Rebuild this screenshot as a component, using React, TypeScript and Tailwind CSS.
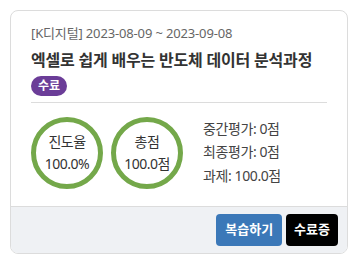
import React from 'react';

const font = { fontFamily: '"Noto Sans", "Noto Sans CJK KR", sans-serif' };

function Ring({ label, value }: { label: string; value: string }) {
  return (
    <div className="w-[72px] h-[72px] rounded-full border-[5px] border-[#74a84a] flex flex-col items-center justify-center text-[14px] leading-[22px] text-[#333] tracking-[-0.5px]">
      <span>{label}</span>
      <span>{value}</span>
    </div>
  );
}

export default function App() {
  return (
    <div className="w-[358px] h-[264px] bg-white p-[10px]" style={font}>
      <div className="h-[244px] rounded-lg border border-[#dcdcdc] flex flex-col overflow-hidden">
        <div className="flex-1 px-[20px] pt-[12px]">
          <div className="text-[13px] leading-[20px] text-[#666] tracking-[-0.15px]">[K디지털] 2023-08-09 ~ 2023-09-08</div>
          <div className="mt-[6px] text-[16px] leading-[22px] font-bold text-[#333] tracking-[-0.2px]">엑셀로 쉽게 배우는 반도체 데이터 분석과정</div>
          <div className="mt-[5px] inline-flex items-center h-[20px] px-[7px] rounded-full bg-[#6b3d98] text-white text-[12px] font-bold">수료</div>
          <div className="mt-[6px] border-t border-[#dcdcdc]" />
          <div className="mt-[14px] flex items-center">
            <div className="flex gap-[8px]">
              <Ring label="진도율" value="100.0%" />
              <Ring label="총점" value="100.0점" />
            </div>
            <div className="ml-[20px] text-[14px] leading-[23.5px] text-[#444] tracking-[-0.4px] -mt-[2px]">
              <div>중간평가: 0점</div>
              <div>최종평가: 0점</div>
              <div>과제: 100.0점</div>
            </div>
          </div>
        </div>
        <div className="h-[47px] border-t border-[#dcdcdc] bg-[#eff1f4] flex items-center justify-end gap-[4px] pr-[9px]">
          <button className="h-[32px] px-[9px] rounded bg-[#3b78b8] text-white text-[13px] font-bold">복습하기</button>
          <button className="h-[32px] px-[8px] rounded bg-black text-white text-[13px] font-bold">수료증</button>
        </div>
      </div>
    </div>
  );
}
